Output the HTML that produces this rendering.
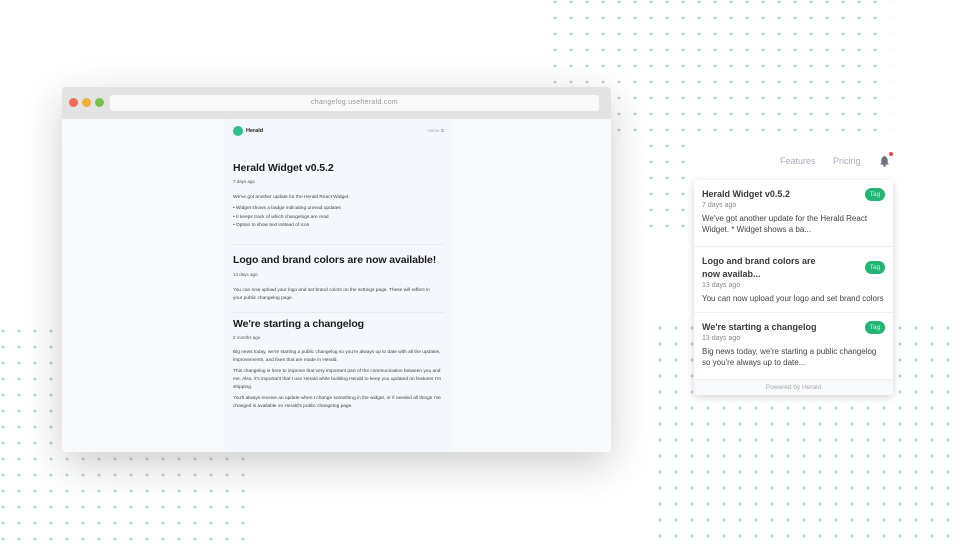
<!DOCTYPE html>
<html><head><meta charset="utf-8"><style>
*{margin:0;padding:0;box-sizing:border-box}
body{width:960px;height:540px;background:#fff;position:relative;overflow:hidden;font-family:"Liberation Sans",Arial,sans-serif}
.dots{position:absolute;background-image:radial-gradient(circle,#9fdfc6 1.2px,transparent 1.6px);background-size:16px 16px}
.win{position:absolute;left:62px;top:87px;width:549px;height:365px;background:#f8f9fa;border-radius:4px;box-shadow:0 12px 40px rgba(0,0,0,.2);overflow:hidden}
.bar{height:32px;background:#e3e3e3;position:relative}
.dot{position:absolute;top:11px;width:9px;height:9px;border-radius:50%}
.url{position:absolute;left:48px;top:8px;width:489px;height:16px;background:#f9f9f9;border-radius:3px;font-size:7px;color:#999;text-align:center;line-height:16px;letter-spacing:.3px}
.col{position:absolute;left:163px;top:32px;width:227px;height:333px;background:#f4f7fb;padding:0 8px;color:#333}
h1{font-size:10.5px;letter-spacing:-.1px;color:#1c1c1c;font-weight:bold;margin-top:0;white-space:nowrap}
.d{font-size:4.5px;color:#555}
p,li{font-size:4.8px;line-height:8.3px;color:#444}
.s3 p{line-height:8px}
ul{list-style:none}
li:before{content:"• ";}
hr{border:0;border-top:1px solid #e8ecef}
.wg{position:absolute;left:694px;top:180px;width:199px;height:215px;background:#fff;border-radius:3px;box-shadow:0 2px 8px rgba(0,0,0,.18);overflow:hidden}
.it{position:absolute;left:0;width:199px;border-bottom:1px solid #f0f0f0;padding:8px 8px}
.t{font-size:9px;color:#3a3a3a;line-height:13px;font-weight:bold}
.s{font-size:7px;color:#888;margin-top:1px}
.b{font-size:8px;color:#444;line-height:11px;margin-top:4px}
.tag{position:absolute;right:8px;width:20px;height:13px;border-radius:7px;background:#22b573;color:#cfeee0;font-size:6.5px;text-align:center;line-height:13px}
</style></head><body>
<div class="dots" style="left:547px;top:-6px;width:343px;height:144px"></div>
<div class="dots" style="left:643px;top:138px;width:48px;height:96px"></div>
<div class="dots" style="left:-5px;top:323px;width:258px;height:230px"></div>
<div class="dots" style="left:652px;top:320px;width:305px;height:230px"></div>

<div class="win">
 <div class="bar">
  <div class="dot" style="left:7px;background:#ef6b51"></div>
  <div class="dot" style="left:20px;background:#efaf36"></div>
  <div class="dot" style="left:33px;background:#78c24a"></div>
  <div class="url">changelog.useherald.com</div>
 </div>
 <div class="col">
  <div style="position:absolute;left:8px;top:7px;width:10px;height:10px;border-radius:50%;background:#2fbf8a"></div>
  <div style="position:absolute;left:21px;top:9px;font-size:5.5px;font-weight:bold;color:#222">Herald</div>
  <div style="position:absolute;right:8px;top:9px;font-size:4.5px;color:#aab">Home ⧉</div>
  <div style="position:absolute;left:8px;top:43px;width:211px">
   <h1>Herald Widget v0.5.2</h1>
   <div class="d" style="margin-top:5px">7 days ago</div>
   <p style="margin-top:10px">We've got another update for the Herald React Widget.</p>
   <ul style="margin-top:3px"><li>Widget shows a badge indicating unread updates</li><li>It keeps track of which changelogs are read</li><li>Option to show text instead of icon</li></ul>
   <hr style="margin-top:14px">
   <h1 style="margin-top:9px">Logo and brand colors are now available!</h1>
   <div class="d" style="margin-top:6px">14 days ago</div>
   <p style="margin-top:10px;width:200px">You can now upload your logo and set brand colors on the settings page. These will reflect in your public changelog page.</p>
   <hr style="margin-top:8px">
   <div class="s3">
   <h1 style="margin-top:5px">We're starting a changelog</h1>
   <div class="d" style="margin-top:5px">2 months ago</div>
   <p style="margin-top:9px">Big news today, we're starting a public changelog so you're always up to date with all the updates, improvements, and fixes that are made in Herald.</p>
   <p style="margin-top:3px">This changelog is here to improve that very important part of the communication between you and me. Also, it's important that I use Herald while building Herald to keep you updated on features I'm shipping.</p>
   <p style="margin-top:3px">You'll always receive an update when I change something in the widget, or if needed all things I've changed is available on Herald's public changelog page.</p>
   </div>
  </div>
 </div>
</div>

<div style="position:absolute;left:780px;top:156px;font-size:9px;color:#a8b0bd">Features</div>
<div style="position:absolute;left:833px;top:156px;font-size:9px;color:#a8b0bd">Pricing</div>
<svg style="position:absolute;left:878px;top:154px" width="14" height="14" viewBox="0 0 14 14"><path d="M6 2.5 C3.8 3 3.3 5 3.3 7 L3.3 9 L2 10.5 L11 10.5 L9.7 9 L9.7 7 C9.7 5 9.2 3 7 2.5 Z" fill="#6b7280"/><circle cx="6.5" cy="11.5" r="1.3" fill="#6b7280"/><circle cx="6.5" cy="2.6" r=".9" fill="#6b7280"/></svg>
<div style="position:absolute;left:889px;top:152px;width:4px;height:4px;border-radius:50%;background:#ef4444"></div>

<div class="wg">
 <div class="it" style="top:0;height:67px"><div class="t">Herald Widget v0.5.2</div><div class="s">7 days ago</div><div class="b">We've got another update for the Herald React Widget. * Widget shows a ba...</div><div class="tag" style="top:8px">Tag</div></div>
 <div class="it" style="top:67px;height:66px"><div class="t" style="width:120px">Logo and brand colors are now availab...</div><div class="s">13 days ago</div><div class="b">You can now upload your logo and set brand colors</div><div class="tag" style="top:14px">Tag</div></div>
 <div class="it" style="top:133px;height:67px"><div class="t">We're starting a changelog</div><div class="s">13 days ago</div><div class="b">Big news today, we're starting a public changelog so you're always up to date...</div><div class="tag" style="top:8px">Tag</div></div>
 <div style="position:absolute;left:0;top:200px;width:199px;height:15px;background:#f8f9fb;font-size:6.5px;color:#aaa;text-align:center;line-height:15px">Powered by Herald</div>
</div>
</body></html>
